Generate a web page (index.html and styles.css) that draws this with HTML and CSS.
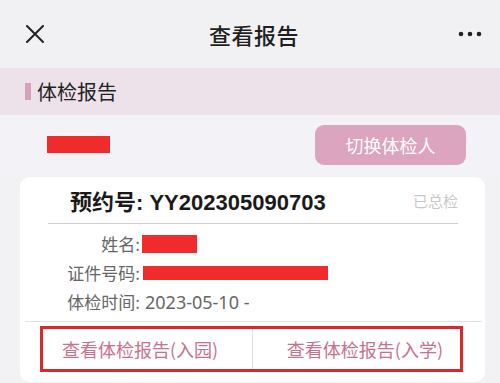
FILE: index.html
```html
<!DOCTYPE html>
<html lang="zh-CN">
<head>
<meta charset="utf-8">
<link rel="stylesheet" href="styles.css">
</head>
<body>
<div class="page">
  <header class="nav">
    <div class="nav-left">
      <svg class="icon-close" width="18" height="18" viewBox="0 0 18 18"><path d="M1 1 L17 17 M17 1 L1 17" stroke="#222" stroke-width="2" stroke-linecap="round" fill="none"/></svg>
    </div>
    <div class="nav-title">查看报告</div>
    <div class="nav-right">
      <svg class="icon-more" width="24" height="6" viewBox="0 0 24 6"><circle cx="3" cy="3" r="2.3" fill="#222"/><circle cx="12" cy="3" r="2.3" fill="#222"/><circle cx="21" cy="3" r="2.3" fill="#222"/></svg>
    </div>
  </header>

  <div class="section-head">
    <span class="section-bar"></span>
    <span class="section-title">体检报告</span>
  </div>

  <div class="person-row">
    <span class="redact redact-person"></span>
    <button class="switch-btn">切换体检人</button>
  </div>

  <div class="card">
    <div class="card-head">
      <span class="order-no">预约号: YY202305090703</span>
      <span class="status">已总检</span>
    </div>
    <div class="card-divider"></div>
    <div class="info">
      <div class="info-row"><span class="label">姓名:</span><span class="redact redact-name"></span></div>
      <div class="info-row"><span class="label">证件号码:</span><span class="redact redact-id"></span></div>
      <div class="info-row"><span class="label">体检时间:</span><span class="value">2023-05-10 -</span></div>
    </div>
    <div class="card-rule"></div>
    <div class="actions">
      <div class="action action-left">查看体检报告(入园)</div>
      <div class="action action-right">查看体检报告(入学)</div>
    </div>
  </div>
</div>
</body>
</html>
```

FILE: styles.css
```css
* { box-sizing: border-box; }
html, body { margin: 0; padding: 0; }
body {
  width: 500px;
  height: 383px;
  overflow: hidden;
  background: #f2f2f5;
  font-family: "Noto Sans CJK SC", "Noto Sans", sans-serif;
}
.page { width: 500px; }

.nav {
  height: 68px;
  background: #f1f0f3;
  display: grid;
  grid-template-columns: 1fr auto 1fr;
  align-items: center;
  padding: 0 18px 0 26px;
}
.nav-left { display: flex; align-items: center; }
.icon-close { display: block; }
.nav-title {
  font-size: 22px;
  font-weight: 500;
  color: #1f1f1f;
  letter-spacing: 0.5px;
}
.nav-right { display: flex; justify-content: flex-end; }
.icon-more { display: block; }

.section-head {
  height: 47px;
  background: #eee2ea;
  display: flex;
  align-items: center;
  padding-left: 25px;
}
.section-bar {
  width: 6px;
  height: 17px;
  background: #d8a0be;
  margin-right: 6px;
}
.section-title {
  font-size: 20px;
  color: #222;
}

.person-row {
  height: 60px;
  background: #f3f2f6;
  display: flex;
  align-items: center;
  justify-content: space-between;
  padding: 0 34px 0 47px;
}
.redact { display: inline-block; background: #f02b2b; }
.redact-person { width: 63px; height: 17px; margin-top: -1px; }
.switch-btn {
  width: 151px;
  height: 40px;
  border: none;
  border-radius: 9px;
  background: #dca4be;
  color: #fff;
  font-family: inherit;
  font-size: 18px;
  padding: 0;
}

.card {
  margin: 2px 15px 0 20px;
  background: #fff;
  border-radius: 10px;
  height: 205px;
}
.card-head {
  height: 46px;
  display: flex;
  align-items: center;
  justify-content: space-between;
  padding: 0 27px 0 50px;
}
.order-no {
  font-family: "Liberation Sans", "Noto Sans CJK SC", sans-serif;
  font-weight: 700;
  font-size: 22px;
  color: #1a1a1a;
}
.status {
  font-size: 15px;
  color: #c9c9c9;
}
.card-divider {
  height: 1px;
  background: #cfcfcf;
  margin: 0 27px 0 28px;
}
.info { padding: 5px 0 5px 0; }
.info-row {
  height: 29px;
  display: flex;
  align-items: center;
  font-size: 17px;
  color: #666;
}
.label {
  width: 120px;
  text-align: right;
}
.value {
  margin-left: 5px;
  font-family: "Noto Sans", "Noto Sans CJK SC", sans-serif;
  font-size: 18px;
}
.redact-name { width: 55px; height: 18px; margin-left: 2px; }
.redact-id { width: 185px; height: 14px; margin-left: 3px; }

.card-rule {
  height: 1px;
  background: #e2e2e2;
  margin: 0 3px 0 5px;
}
.actions {
  margin: 4px 22px 0 20px;
  height: 46px;
  border: 3px solid #d82a2a;
  display: flex;
  align-items: stretch;
}
.action {
  flex: 1;
  display: flex;
  align-items: center;
  font-size: 18px;
  color: #c8718f;
}
.action-left { padding-left: 19px; }
.action-right {
  justify-content: flex-end;
  padding-right: 17px;
  border-left: 1px solid #e0e0e0;
}
```
